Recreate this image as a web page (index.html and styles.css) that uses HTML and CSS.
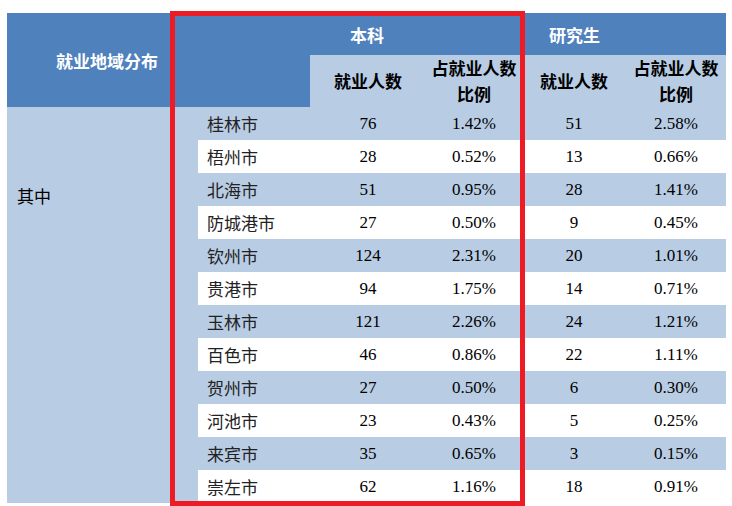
FILE: index.html
```html
<!DOCTYPE html>
<html lang="zh">
<head>
<meta charset="utf-8">
<link rel="stylesheet" href="styles.css">
</head>
<body>
<div class="page">
  <div class="table">
    <div class="h-region">就业地域分布</div>
    <div class="h-group h-bk">本科</div>
    <div class="h-group h-yjs">研究生</div>
    <div class="h-blank"></div>
    <div class="h-sub">就业人数</div>
    <div class="h-sub two">占就业人数<br>比例</div>
    <div class="h-sub">就业人数</div>
    <div class="h-sub two">占就业人数<br>比例</div>
    <div class="qizhong">其中</div>
    <div class="rows">
      <div class="row alt"><span class="city">桂林市</span><span class="num">76</span><span class="num">1.42%</span><span class="num">51</span><span class="num">2.58%</span></div>
      <div class="row"><span class="city">梧州市</span><span class="num">28</span><span class="num">0.52%</span><span class="num">13</span><span class="num">0.66%</span></div>
      <div class="row alt"><span class="city">北海市</span><span class="num">51</span><span class="num">0.95%</span><span class="num">28</span><span class="num">1.41%</span></div>
      <div class="row"><span class="city">防城港市</span><span class="num">27</span><span class="num">0.50%</span><span class="num">9</span><span class="num">0.45%</span></div>
      <div class="row alt"><span class="city">钦州市</span><span class="num">124</span><span class="num">2.31%</span><span class="num">20</span><span class="num">1.01%</span></div>
      <div class="row"><span class="city">贵港市</span><span class="num">94</span><span class="num">1.75%</span><span class="num">14</span><span class="num">0.71%</span></div>
      <div class="row alt"><span class="city">玉林市</span><span class="num">121</span><span class="num">2.26%</span><span class="num">24</span><span class="num">1.21%</span></div>
      <div class="row"><span class="city">百色市</span><span class="num">46</span><span class="num">0.86%</span><span class="num">22</span><span class="num">1.11%</span></div>
      <div class="row alt"><span class="city">贺州市</span><span class="num">27</span><span class="num">0.50%</span><span class="num">6</span><span class="num">0.30%</span></div>
      <div class="row"><span class="city">河池市</span><span class="num">23</span><span class="num">0.43%</span><span class="num">5</span><span class="num">0.25%</span></div>
      <div class="row alt"><span class="city">来宾市</span><span class="num">35</span><span class="num">0.65%</span><span class="num">3</span><span class="num">0.15%</span></div>
      <div class="row"><span class="city">崇左市</span><span class="num">62</span><span class="num">1.16%</span><span class="num">18</span><span class="num">0.91%</span></div>
    </div>
    <div class="highlight"></div>
  </div>
</div>
</body>
</html>
```

FILE: styles.css
```css
html, body {
  margin: 0;
  padding: 0;
  background: #ffffff;
}
.page {
  width: 732px;
  height: 506px;
  overflow: hidden;
  padding: 13px 0 0 7px;
  box-sizing: border-box;
}
.table {
  position: relative;
  display: grid;
  grid-template-columns: 191px 112px 116px 96px 104px 100px;
  grid-template-rows: 42px 52px 396px;
  width: 719px;
  font-family: "Liberation Serif", "Noto Sans CJK SC", serif;
  font-size: 17px;
  color: #000;
}
.h-region {
  grid-column: 1;
  grid-row: 1 / 3;
  background: #4f81bd;
  color: #fff;
  font-family: "Noto Sans CJK SC", sans-serif;
  font-weight: bold;
  display: flex;
  align-items: center;
  justify-content: center;
  padding-left: 9px;
}
.h-group {
  grid-row: 1;
  background: #4f81bd;
  color: #fff;
  font-family: "Noto Sans CJK SC", sans-serif;
  font-weight: bold;
  display: flex;
  align-items: center;
}
.h-bk {
  grid-column: 2 / 5;
  padding-left: 152px;
}
.h-yjs {
  grid-column: 5 / 7;
  padding-left: 27px;
}
.h-blank {
  grid-column: 2;
  grid-row: 2;
  background: #4f81bd;
}
.h-sub {
  grid-row: 2;
  background: #b8cce4;
  font-family: "Noto Sans CJK SC", sans-serif;
  font-weight: bold;
  display: flex;
  align-items: center;
  justify-content: center;
  text-align: center;
  line-height: 26px;
}
.qizhong {
  grid-column: 1;
  grid-row: 3;
  background: #b8cce4;
  font-family: "Noto Sans CJK SC", sans-serif;
  padding: 76px 0 0 10px;
}
.rows {
  grid-column: 2 / 7;
  grid-row: 3;
  display: flex;
  flex-direction: column;
}
.row {
  display: grid;
  grid-template-columns: 112px 116px 96px 104px 100px;
  height: 33px;
  align-items: center;
  background: #ffffff;
}
.row.alt {
  background: #b8cce4;
}
.city {
  font-family: "Noto Sans CJK SC", sans-serif;
  padding-left: 9px;
  color: #222;
}
.num {
  text-align: center;
}
.highlight {
  position: absolute;
  left: 163px;
  top: -2px;
  width: 345px;
  height: 485px;
  border: 5px solid #ed1c24;
  pointer-events: none;
}
```
